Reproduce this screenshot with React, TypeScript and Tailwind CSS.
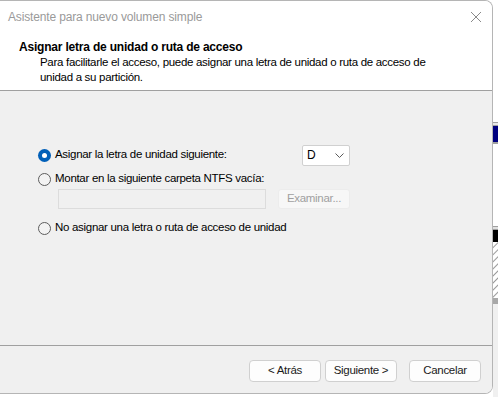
import React from 'react';

const font = { fontFamily: '"Liberation Sans", Arial, sans-serif' };

const Radio: React.FC<{ checked?: boolean }> = ({ checked }) =>
    checked ? (
        <span className="w-[13px] h-[13px] rounded-full bg-[#005fb8] flex items-center justify-center shrink-0">
            <span className="w-[5px] h-[5px] rounded-full bg-white" />
        </span>
    ) : (
        <span className="w-[13px] h-[13px] rounded-full border border-[#5d5d5d] bg-[#f3f3f3] shrink-0" />
    );

const Button: React.FC<{ label: string }> = ({ label }) => (
    <button className="w-[72px] h-[22px] rounded-[4px] border border-[#d0d0d0] bg-[#fdfdfd] text-[#1a1a1a] flex items-center justify-center">
        {label}
    </button>
);

const App: React.FC = () => {
    return (
        <div className="w-[498px] h-[397px] flex bg-white overflow-hidden text-[11.5px] tracking-[-0.3px] text-black" style={font}>
            <div className="w-[493px] h-[394px] flex flex-col border-r border-b border-t border-[#b5b5b5] rounded-tr-[8px] rounded-br-[8px] overflow-hidden shrink-0">
                {/* title bar */}
                <div className="h-[31px] bg-white flex items-center justify-between pl-[8px] pr-[9px]">
                    <span className="text-[12px] tracking-[-0.15px] text-[#9a9a9a]">Asistente para nuevo volumen simple</span>
                    <svg width="12" height="12" viewBox="0 0 12 12" className="mr-[1px]">
                        <path d="M1 1 L11 11 M11 1 L1 11" stroke="#8a8a8a" strokeWidth="1" fill="none" />
                    </svg>
                </div>

                {/* header */}
                <div className="h-[59px] bg-white pl-[19px] pt-[7px] border-b border-[#a0a0a0]">
                    <div className="font-bold text-[12px] tracking-[-0.2px] leading-[16px]">Asignar letra de unidad o ruta de acceso</div>
                    <div className="pl-[21px] leading-[15px]">
                        Para facilitarle el acceso, puede asignar una letra de unidad o ruta de acceso de
                        <br />
                        unidad a su partición.
                    </div>
                </div>

                {/* body */}
                <div className="flex-1 bg-[#f0f0f0] pl-[38px] pt-[54px] border-b border-[#a0a0a0]">
                    <div className="w-[312px] h-[20px] flex items-center justify-between">
                        <div className="flex items-center gap-[4px]">
                            <Radio checked />
                            <span>Asignar la letra de unidad siguiente:</span>
                        </div>
                        <div className="w-[48px] h-[21px] bg-white border border-[#d0d0d0] rounded-[2px] flex items-center justify-between pl-[4px] pr-[5px]">
                            <span className="text-[12px]">D</span>
                            <svg width="9" height="5" viewBox="0 0 9 5">
                                <path d="M0.5 0.5 L4.5 4.5 L8.5 0.5" stroke="#5a5a5a" strokeWidth="1" fill="none" />
                            </svg>
                        </div>
                    </div>
                    <div className="mt-[4px] h-[20px] flex items-center gap-[4px]">
                        <Radio />
                        <span>Montar en la siguiente carpeta NTFS vacía:</span>
                    </div>
                    <div className="w-[312px] pl-[20px] h-[20px] flex items-center justify-between">
                        <div className="w-[208px] h-[20px] border border-[#dcdcdc] bg-[#f0f0f0]" />
                        <div className="w-[72px] h-[20px] rounded-[3px] bg-[#f7f7f7] border border-[#ececec] text-[#a0a0a0] flex items-center justify-center">
                            Examinar...
                        </div>
                    </div>
                    <div className="mt-[9px] h-[20px] flex items-center gap-[4px]">
                        <Radio />
                        <span>No asignar una letra o ruta de acceso de unidad</span>
                    </div>
                </div>

                {/* footer */}
                <div className="h-[47px] bg-[#f0f0f0] flex items-start justify-end pt-[14px] pr-[11px]">
                    <div className="flex gap-[4px]">
                        <Button label="< Atrás" />
                        <Button label="Siguiente >" />
                    </div>
                    <div className="ml-[12px]">
                        <Button label="Cancelar" />
                    </div>
                </div>
            </div>

            {/* window behind */}
            <div className="flex-1 flex flex-col">
                <div className="h-[122px] bg-white" />
                <div className="h-[4px] border-y border-[#a0a0a0] bg-[#e8e8e8]" />
                <div className="h-[16px] bg-[#00007f]" />
                <div className="h-[2px] bg-[#a0a0a0]" />
                <div className="h-[82px] bg-white" />
                <div className="h-[4px] border-y border-[#a0a0a0] bg-[#e0e0e0]" />
                <div className="h-[12px] bg-black" />
                <div className="h-[56px] bg-[repeating-linear-gradient(135deg,#ffffff_0px,#ffffff_3px,#9a9a9a_4px,#ffffff_5px)]" />
                <div className="h-[6px] bg-[#a8a8a8]" />
                <div className="flex-1 bg-[#f0f0f0]" />
            </div>
        </div>
    );
};

export default App;
